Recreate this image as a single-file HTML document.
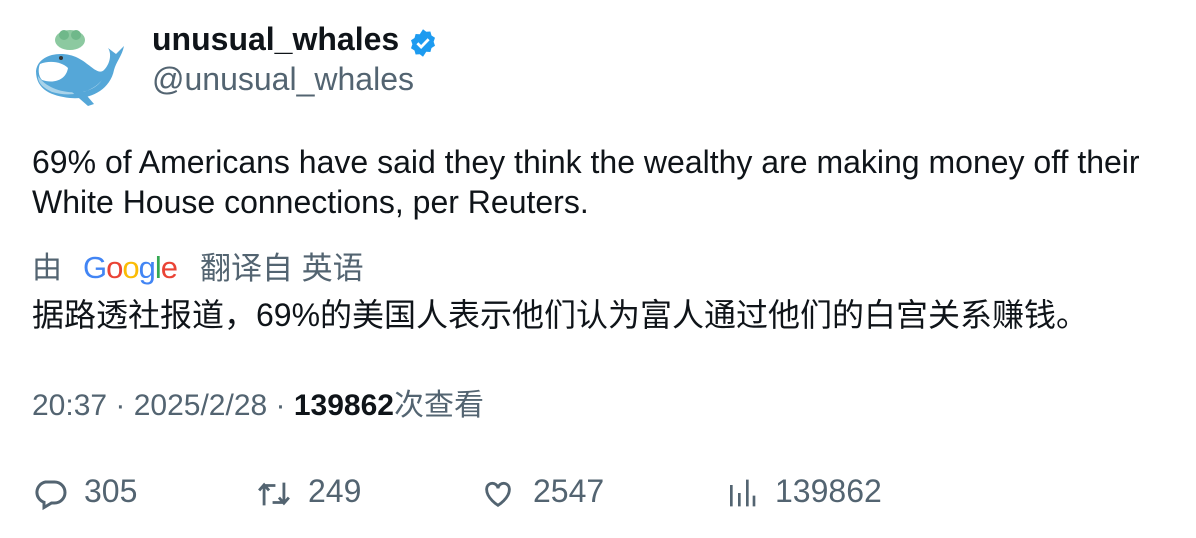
<!DOCTYPE html>
<html><head><meta charset="utf-8"><style>
body{margin:0;width:1196px;height:538px;background:#fff;font-family:"Liberation Sans","Noto Sans CJK SC",sans-serif;color:#0f1419;position:relative;overflow:hidden}
.a{position:absolute;white-space:nowrap}
.g{color:#536471}
</style></head><body>
<svg class="a" style="left:32px;top:26px" width="96" height="86" viewBox="0 0 96 86">
<ellipse cx="38" cy="14" rx="15" ry="10" fill="#8cc9a0"/>
<circle cx="32" cy="9" r="5" fill="#6fb88a"/><circle cx="44" cy="9" r="5" fill="#6fb88a"/>
<path d="M4 45 C6 28 30 24 46 32 C58 38 66 50 72 44 C78 38 80 28 76 22 L84 28 L92 20 C90 30 84 36 82 44 C78 64 58 74 38 72 C20 70 4 64 4 45Z" fill="#55a7d8"/>
<path d="M6 50 C14 62 32 68 50 66 C60 64 66 60 70 54 C60 66 40 72 20 66 C12 62 6 58 6 50Z" fill="#a9d3ea"/>
<path d="M8 38 C18 34 30 36 36 42 C34 54 22 58 10 54 C6 50 6 42 8 38Z" fill="#fff"/>
<path d="M40 66 L56 80 L62 78 L50 64Z" fill="#55a7d8"/>
<circle cx="29" cy="32" r="2" fill="#333"/>
</svg>
<div class="a" style="left:152px;top:21px;font-size:32px;font-weight:bold">unusual_whales</div>
<svg class="a" style="left:408px;top:28px" width="30" height="30" viewBox="0 0 24 24"><path d="M12 1l2.6 2 3.3-.2.9 3.2 2.8 1.8-1.1 3.2 1.1 3.2-2.8 1.8-.9 3.2-3.3-.2L12 23l-2.6-2-3.3.2-.9-3.2-2.8-1.8 1.1-3.2-1.1-3.2 2.8-1.8.9-3.2 3.3.2z" fill="#1d9bf0"/><path d="M7.5 12.2l3 3 6-6.2" stroke="#fff" stroke-width="2.2" fill="none"/></svg>
<div class="a g" style="left:152px;top:61px;font-size:32px">@unusual_whales</div>
<div class="a" style="left:32px;top:142px;font-size:32px;line-height:40px">69% of Americans have said they think the wealthy are making money off their<br>White House connections, per Reuters.</div>
<div class="a g" style="left:32px;top:243px;font-size:30px">由</div>
<div class="a" style="left:83px;top:250px;font-size:31px;letter-spacing:-1px"><span style="color:#4285f4">G</span><span style="color:#ea4335">o</span><span style="color:#fbbc05">o</span><span style="color:#4285f4">g</span><span style="color:#34a853">l</span><span style="color:#ea4335">e</span></div>
<div class="a g" style="left:200px;top:243px;font-size:31px">翻译自 英语</div>
<div class="a" style="left:32px;top:290px;font-size:32px">据路透社报道，69%的美国人表示他们认为富人通过他们的白宫关系赚钱。</div>
<div class="a g" style="left:32px;top:380px;font-size:30px">20:37 · 2025/2/28 · <b style="color:#0f1419">139862</b>次查看</div>
<svg class="a" style="left:32px;top:476px" width="36" height="36" viewBox="0 0 24 24" fill="none" stroke="#536471" stroke-width="2"><path d="M9 4h6a7 7 0 0 1 0 14h-2l-5 3v-3.5A7 7 0 0 1 9 4z"/></svg>
<div class="a g" style="left:84px;top:473px;font-size:32px">305</div>
<svg class="a" style="left:256px;top:477px" width="36" height="34" viewBox="0 0 24 24" fill="none" stroke="#536471" stroke-width="2"><path d="M5 20V6M1.5 9.5L5 5.5l3.5 4M5 6h8M19 4v14M15.5 14.5L19 18.5l3.5-4M19 18h-8"/></svg>
<div class="a g" style="left:308px;top:473px;font-size:32px">249</div>
<svg class="a" style="left:481px;top:477px" width="34" height="34" viewBox="0 0 24 24" fill="none" stroke="#536471" stroke-width="2"><path d="M12 20s-8-5-8-11a4 4 0 0 1 8-1 4 4 0 0 1 8 1c0 6-8 11-8 11z"/></svg>
<div class="a g" style="left:533px;top:473px;font-size:32px">2547</div>
<svg class="a" style="left:726px;top:477px" width="32" height="32" viewBox="0 0 24 24" stroke="#536471" stroke-width="2"><path d="M4 22V6M10 22V12M16 22V2M21 22V14"/></svg>
<div class="a g" style="left:775px;top:473px;font-size:32px">139862</div>
</body></html>
